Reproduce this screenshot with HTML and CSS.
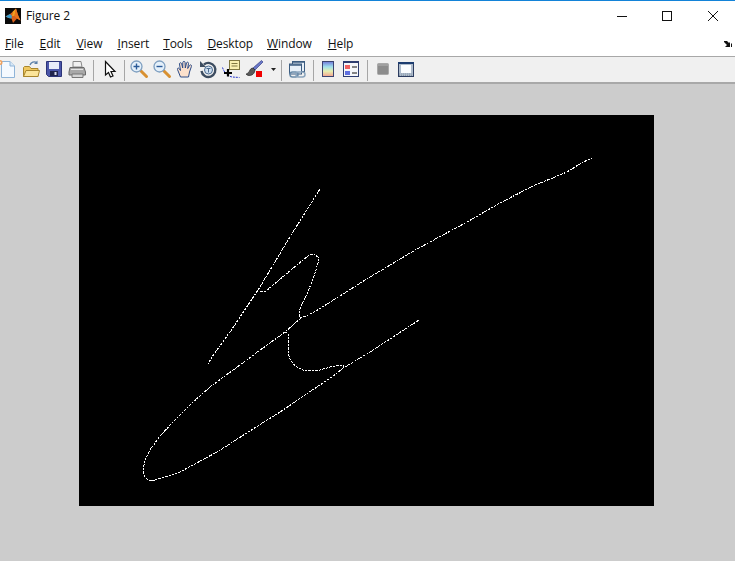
FILE: index.html
```html
<!DOCTYPE html>
<html lang="en">
<head>
<meta charset="utf-8">
<title>Figure 2</title>
<link rel="stylesheet" href="styles.css">
</head>
<body>
<div class="window">
  <header class="titlebar">
    <svg class="app-icon" width="16" height="16" viewBox="0 0 16 16">
      <rect width="16" height="16" fill="#0a0a0a"/>
      <path d="M.5 8.500 5 6 8 3.500 11 .5 13 7 15.500 12.500 12 10.500 8 15 6.500 10.500 3.500 10Z" fill="#d8601c"/>
      <path d="M.5 8.500 5 6 7 8 6.500 10.500 3.500 10Z" fill="#3a9ccc"/>
      <path d="M8 3.500 11 .5 9.500 8 7 8Z" fill="#f0a020"/>
      <path d="M11 .5 13 7 15.500 12.500 12 10.500 9.500 8Z" fill="#e8741c"/>
    </svg>
    <span class="title">Figure 2</span>
    <div class="caption-buttons">
      <svg class="caption-btn" width="46" height="30" viewBox="0 0 46 30"><path d="M19 15.500H29" stroke="#111" fill="none"/></svg>
      <svg class="caption-btn" width="46" height="30" viewBox="0 0 46 30"><rect x="18.500" y="10.500" width="9" height="9" stroke="#111" fill="none"/></svg>
      <svg class="caption-btn" width="46" height="30" viewBox="0 0 46 30"><path d="M18 10 28 20M28 10 18 20" stroke="#111" fill="none"/></svg>
    </div>
  </header>
  <nav class="menubar">
    <span class="menu m-file"><u>F</u>ile</span>
    <span class="menu m-edit"><u>E</u>dit</span>
    <span class="menu m-view"><u>V</u>iew</span>
    <span class="menu m-insert"><u>I</u>nsert</span>
    <span class="menu m-tools"><u>T</u>ools</span>
    <span class="menu m-desktop"><u>D</u>esktop</span>
    <span class="menu m-window"><u>W</u>indow</span>
    <span class="menu m-help"><u>H</u>elp</span>
    <svg class="dock" width="9" height="8" viewBox="0 0 9 8"><path d="M0 1H3L5 3 6 2V7H1L3 5 0 2Z M7 3 8 4V7H7Z" fill="#111"/></svg>
  </nav>
  <div class="toolbar">
    <svg class="tool tool-first" width="20" height="20" viewBox="0 0 20 20">
      <path d="M3.500 2.500H12L16.500 7V18.500H3.500Z" fill="#f4f9ff" stroke="#8fb4d8"/>
      <path d="M12 2.500V7H16.500" fill="#d8e8f6" stroke="#8fb4d8"/>
      <circle cx="2" cy="3.500" r="2.500" fill="#f0a060"/><circle cx="2" cy="3.500" r="1" fill="#fff0d0"/>
    </svg>
    <svg class="tool" width="20" height="20" viewBox="0 0 20 20">
      <path d="M2.500 8.500V17.500H17V9.500H10L8.500 7.500H3.500Z" fill="#f0c860" stroke="#a8852c"/>
      <path d="M2.500 17.500 5 11.500H18.500L17 17.500Z" fill="#fbe49a" stroke="#a8852c"/>
      <path d="M9 6C10 3 13 2 16 3.500" fill="none" stroke="#5a7fa8" stroke-width="1.300"/>
      <path d="M16.500 1.500V5H13Z" fill="#5a7fa8"/>
    </svg>
    <svg class="tool" width="20" height="20" viewBox="0 0 20 20">
      <path d="M2.500 2.500H17.500V17.500H4.500L2.500 15.500Z" fill="#4a55a8" stroke="#2c3478"/>
      <rect x="5" y="3" width="10" height="7" fill="#e8ecfa"/>
      <rect x="6" y="12" width="8" height="5" fill="#20244c"/>
      <rect x="10.500" y="13" width="2" height="3" fill="#d8dcf0"/>
    </svg>
    <svg class="tool" width="20" height="20" viewBox="0 0 20 20">
      <path d="M6 8V2.500H14L15 8Z" fill="#f0f0f0" stroke="#8a8a8a"/>
      <path d="M3 8.500H17L18.500 13V16H2V13Z" fill="#a8a8a8" stroke="#6a6a6a"/>
      <path d="M5 15H16V18.500H5Z" fill="#d4d4d4" stroke="#777"/>
      <path d="M4 10.500H16" stroke="#e4e4e4"/>
    </svg>
    <span class="sep sep-a"></span>
    <svg class="tool tool-arrow" width="20" height="20" viewBox="0 0 20 20">
      <path d="M5.500 2.500V16L8.500 13.500 10.500 18 13 17 11 12.500H15Z" fill="#fff" stroke="#111" stroke-width="1.200"/>
    </svg>
    <span class="sep sep-b"></span>
    <svg class="tool" width="20" height="20" viewBox="0 0 20 20">
      <path d="M11.500 11.500 17.500 17.500" stroke="#d89030" stroke-width="3" stroke-linecap="round"/>
      <circle cx="7.500" cy="7.500" r="5.500" fill="#e4f0fa" stroke="#7e9fc0" stroke-width="1.300"/>
      <path d="M4.500 7.500H10.500M7.500 4.500V10.500" stroke="#2a5a98" stroke-width="1.400"/>
    </svg>
    <svg class="tool" width="20" height="20" viewBox="0 0 20 20">
      <path d="M11.500 11.500 17.500 17.500" stroke="#d89030" stroke-width="3" stroke-linecap="round"/>
      <circle cx="7.500" cy="7.500" r="5.500" fill="#e4f0fa" stroke="#7e9fc0" stroke-width="1.300"/>
      <path d="M4.500 7.500H10.500" stroke="#2a5a98" stroke-width="1.400"/>
    </svg>
    <svg class="tool" width="20" height="20" viewBox="0 0 20 20">
      <path d="M5.500 18 2.500 10.500C2 9 3.800 8.500 4.500 10L5.500 11.500 4.500 5C4.300 3.500 6.300 3.300 6.700 4.800L7.700 9 7.800 3.500C7.900 2 10 2 10.100 3.500L10.300 9 11.500 4C11.900 2.600 13.800 3.100 13.500 4.600L12.700 9.500 14.500 6.500C15.300 5.200 17 6 16.400 7.500L14.500 13 13.500 18Z" fill="#fbe0cc" stroke="#2c4c88"/>
    </svg>
    <svg class="tool" width="20" height="20" viewBox="0 0 20 20">
      <path d="M6 5.500A7 7 0 1 1 3.500 12" fill="none" stroke="#3c4c60" stroke-width="2.400"/>
      <path d="M2 2V8H8Z" fill="#3c4c60"/>
      <circle cx="10.500" cy="11" r="4" fill="#cfe0f0" stroke="#4a6a90"/>
      <path d="M8.500 9.500H12.500M10.500 9.500V13.500" stroke="#4a6a90"/>
    </svg>
    <svg class="tool" width="20" height="20" viewBox="0 0 20 20">
      <path d="M1.500 8.500C3 13 5 15 8 17 11 18.500 14 18 18.500 18.500" fill="none" stroke="#2233cc" stroke-dasharray="2 1"/>
      <rect x="8.500" y="1.500" width="10" height="9" fill="#f8f0b0" stroke="#807840"/>
      <path d="M10.500 4.500H16.500M10.500 7H16.500" stroke="#807840"/>
      <path d="M7 10V17.500M3 14H11" stroke="#000" stroke-width="2.200"/>
    </svg>
    <svg class="tool" width="20" height="20" viewBox="0 0 20 20">
      <path d="M17.500 1.500 19 3 11 11 9 9Z" fill="#6a78c8" stroke="#3a4488" stroke-width=".7"/>
      <path d="M9 9C6 9 6 12 4.500 13.500 3.500 14.500 2 15 2 15 4 17.500 9 17 10.500 13L11 11Z" fill="#5a5a5a" stroke="#222" stroke-width=".7"/>
      <rect x="12" y="12" width="6" height="6" fill="#f00000"/>
    </svg>
    <svg class="caret" width="5" height="3" viewBox="0 0 5 3"><path d="M0 0H5L2.500 3Z" fill="#222"/></svg>
    <span class="sep sep-c"></span>
    <svg class="tool" width="20" height="20" viewBox="0 0 20 20">
      <rect x="5.500" y="2.500" width="12" height="10" fill="#e8f0f8" stroke="#3c5c80"/>
      <rect x="2.500" y="5" width="12" height="10" fill="#e8f0f8" stroke="#3c5c80"/>
      <path d="M3 6H14M6 3H17" stroke="#3c5c80" stroke-width="1.500"/>
      <rect x="3" y="13" width="8" height="5" rx="2.500" fill="none" stroke="#6a8ba8" stroke-width="1.500"/>
      <rect x="9" y="13" width="9" height="5" rx="2.500" fill="none" stroke="#8aa4bc" stroke-width="1.500"/>
    </svg>
    <span class="sep sep-d"></span>
    <svg class="tool" width="20" height="20" viewBox="0 0 20 20">
      <defs><linearGradient id="cbar" x1="0" y1="0" x2="0" y2="1">
        <stop offset="0" stop-color="#6f78d8"/><stop offset=".35" stop-color="#9fe0ec"/><stop offset=".65" stop-color="#e8f0b0"/><stop offset="1" stop-color="#f4a090"/>
      </linearGradient></defs>
      <rect x="4.500" y="2.500" width="11" height="15" fill="url(#cbar)" stroke="#3c4470"/>
    </svg>
    <svg class="tool" width="20" height="20" viewBox="0 0 20 20">
      <rect x="2.500" y="2.500" width="15" height="15" fill="#f4f6fa" stroke="#2c3c70"/>
      <rect x="2" y="2" width="16" height="2" fill="#2c3c70"/>
      <rect x="4" y="6" width="5" height="4" fill="#f06060"/>
      <rect x="4" y="12" width="5" height="4" fill="#6070e0"/>
      <path d="M11 8H16M11 14H16" stroke="#111"/>
    </svg>
    <span class="sep sep-e"></span>
    <svg class="tool" width="20" height="20" viewBox="0 0 20 20">
      <rect x="4.500" y="4.500" width="11" height="11" rx="1" fill="#8c8c8c" stroke="#a8a8a8"/>
      <path d="M5 6H15" stroke="#b4b4b4"/>
    </svg>
    <svg class="tool" width="20" height="20" viewBox="0 0 20 20">
      <rect x="2.500" y="3.500" width="15" height="14" fill="#aebccc" stroke="#2c3c60"/>
      <rect x="2" y="3" width="16" height="2" fill="#1c3c70"/>
      <rect x="5" y="6" width="10" height="8" fill="#fbfdff"/>
      <path d="M3 15H17M3 16.500H17" stroke="#8a98a8" stroke-dasharray="1 1"/>
    </svg>
  </div>
  <main class="figure">
    <svg class="axes" width="575" height="391" viewBox="79 115 575 391">
      <g class="trace">
        <path d="M320 189 288 240 260 287 232 329 212 357 208 364"/>
        <path d="M260 292 266 291 285 275 303 260 309 255 314 254 318 257 318 263 315 273 308 292 301 306 299 312 299 316 301 318 308 315 316 311 370 277 417 249 467 222 500 203 533 186 567 172 583 162 588 160 592 158"/>
        <path d="M301 318 285 332 263 348 210 387 192 403 173 422 160 436 150 450 146 458 143 468 144 475 147 479 151 481 155 480 165 477 180 472 217 452 253 429 280 412 320 385 336 374 343 368 344 366 342 365 336 366 330 367 320 370 303 370 297 367 293 364 290 359 288 353 288 344 289 335 287 333 285 332"/>
        <path d="M345 367 370 352 419 320"/>
      </g>
    </svg>
  </main>
</div>
</body>
</html>
```
FILE: styles.css
```css
* { box-sizing: border-box; }
html, body { margin: 0; padding: 0; }
body { width: 735px; height: 561px; overflow: hidden; font-family: "Open Sans", "Noto Sans", sans-serif; font-size: 12px; color: #111; background: #ccc; }
.window { display: flex; flex-direction: column; height: 561px; }

.titlebar { display: flex; align-items: center; height: 32px; flex: none; background: #fff; border-top: 1px solid #1383d8; padding-left: 5px; padding-bottom: 1px; }
.app-icon { flex: none; margin-top: -1px; }
.title { margin-left: 5px; margin-top: -1px; font-size: 12px; letter-spacing: -0.1px; }
.caption-buttons { display: flex; margin-left: auto; margin-top: -1px; margin-right: -1px; }
.caption-btn { display: block; }

.menubar { display: flex; align-items: center; height: 25px; flex: none; background: #fff; padding-left: 5px; padding-bottom: 1px; border-bottom: 1px solid #a8a8a8; letter-spacing: -0.1px; }
.menu { flex: none; }
.m-edit { margin-left: 16px; }
.m-view { margin-left: 16px; }
.m-insert { margin-left: 15px; }
.m-tools { margin-left: 14px; }
.m-desktop { margin-left: 15px; }
.m-window { margin-left: 14px; }
.m-help { margin-left: 16px; }
.dock { margin-left: auto; margin-right: 2px; }

.toolbar { display: flex; align-items: center; height: 27px; flex: none; background: #f0f0f0; border-bottom: 2px solid #a8a8a8; padding-bottom: 1px; padding-left: 0; }
.tool { flex: none; display: block; margin: 0 1.500px; }
.tool-first { margin-left: -2px; }
.tool-arrow { margin-left: 4.500px; margin-right: 0; }
.sep { flex: none; width: 1px; height: 21px; margin-top: 2px; background: #a6a6a6; }
.sep-a { margin-left: 4px; margin-right: 2px; }
.sep-b { margin-left: 3.500px; margin-right: 3px; }
.sep-c { margin-left: 5px; margin-right: 3.500px; }
.sep-d { margin-left: 4px; margin-right: 3px; }
.sep-e { margin-left: 4px; margin-right: 3.500px; }
.caret { flex: none; margin-left: 5.500px; }

.figure { flex: 1; background: #ccc; padding: 31px 0 0 79px; }
.axes { display: block; background: #000; }
.trace { fill: none; stroke: #fff; stroke-width: 1; stroke-dasharray: 3 1 2 1; shape-rendering: crispEdges; }
```
